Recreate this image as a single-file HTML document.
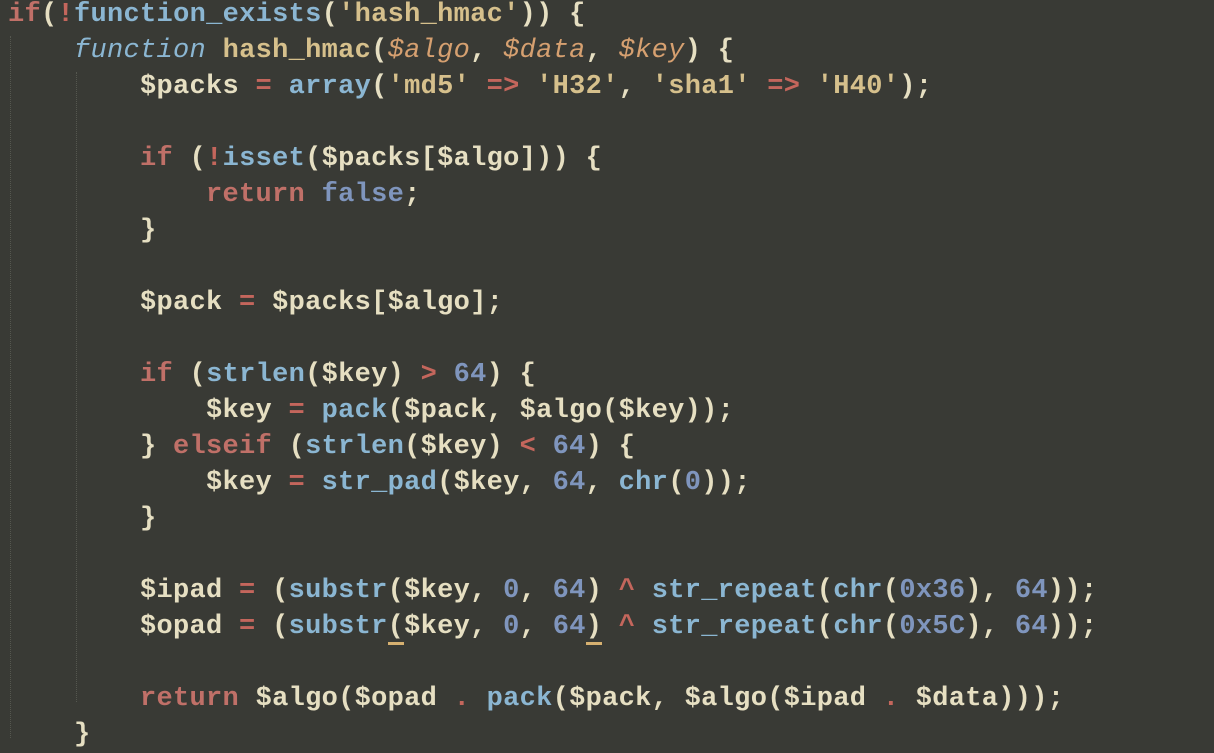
<!DOCTYPE html>
<html><head><style>
html,body{margin:0;padding:0;width:1214px;height:738px;overflow:hidden;background:#393a35;}
pre{margin:0;position:absolute;left:8px;top:-3px;font-family:"Liberation Mono",monospace;font-size:27px;line-height:36px;color:#e6dfc2;font-weight:bold;letter-spacing:0.3px;}
.k{color:#c07068}.f{color:#8bb6d2}.s{color:#d6c08c}.n{color:#7f95bd}.o{color:#c4665c}.i{font-style:italic;color:#d6a070;font-weight:normal}.fi{font-style:italic;color:#8bb6d2;font-weight:normal}.p{color:#e6dfc2}
.u{border-bottom:3px solid #d6b070}
.g{position:absolute;width:0;border-left:1px dotted #55574f;}
</style></head><body>
<div class="g" style="left:10px;top:36px;height:702px"></div>
<div class="g" style="left:76px;top:72px;height:630px"></div>
<pre><span class="k">if</span>(<span class="o">!</span><span class="f">function_exists</span>(<span class="s">'hash_hmac'</span>)) {
    <span class="fi">function</span> <span class="s">hash_hmac</span>(<span class="i">$algo</span>, <span class="i">$data</span>, <span class="i">$key</span>) {
        $packs <span class="o">=</span> <span class="f">array</span>(<span class="s">'md5'</span> <span class="o">=&gt;</span> <span class="s">'H32'</span>, <span class="s">'sha1'</span> <span class="o">=&gt;</span> <span class="s">'H40'</span>);

        <span class="k">if</span> (<span class="o">!</span><span class="f">isset</span>($packs[$algo])) {
            <span class="k">return</span> <span class="n">false</span>;
        }

        $pack <span class="o">=</span> $packs[$algo];

        <span class="k">if</span> (<span class="f">strlen</span>($key) <span class="o">&gt;</span> <span class="n">64</span>) {
            $key <span class="o">=</span> <span class="f">pack</span>($pack, $algo($key));
        } <span class="k">elseif</span> (<span class="f">strlen</span>($key) <span class="o">&lt;</span> <span class="n">64</span>) {
            $key <span class="o">=</span> <span class="f">str_pad</span>($key, <span class="n">64</span>, <span class="f">chr</span>(<span class="n">0</span>));
        }

        $ipad <span class="o">=</span> (<span class="f">substr</span>($key, <span class="n">0</span>, <span class="n">64</span>) <span class="o">^</span> <span class="f">str_repeat</span>(<span class="f">chr</span>(<span class="n">0x36</span>), <span class="n">64</span>));
        $opad <span class="o">=</span> (<span class="f">substr</span><span class="u">(</span>$key, <span class="n">0</span>, <span class="n">64</span><span class="u">)</span> <span class="o">^</span> <span class="f">str_repeat</span>(<span class="f">chr</span>(<span class="n">0x5C</span>), <span class="n">64</span>));

        <span class="k">return</span> $algo($opad <span class="o">.</span> <span class="f">pack</span>($pack, $algo($ipad <span class="o">.</span> $data)));
    }
</pre>
</body></html>
